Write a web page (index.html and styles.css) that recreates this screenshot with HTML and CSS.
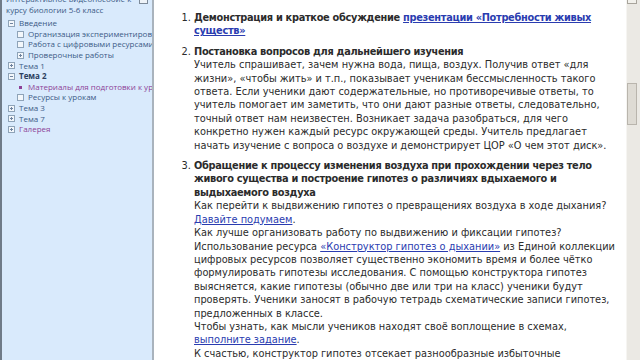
FILE: index.html
```html
<!DOCTYPE html>
<html lang="ru">
<head>
  <meta charset="UTF-8">
  <title>Урок биологии</title>
  <link rel="stylesheet" href="styles.css">
</head>
<body>

<div class="page">

  <div class="sidebar">
    <span class="pin"></span>
    <div class="sb-title">Интерактивное видеопособие к курсу биологии 5-6 класс</div>
    <ul class="tree">
      <li><span class="box minus"></span>Введение</li>
      <li class="sub"><span class="box"></span>Организация экспериментирования</li>
      <li class="sub"><span class="box"></span>Работа с цифровыми ресурсами</li>
      <li class="sub"><span class="box plus"></span>Проверочные работы</li>
      <li><span class="box plus"></span>Тема 1</li>
      <li class="current"><span class="box minus"></span>Тема 2</li>
      <li class="sub visited"><span class="dot"></span>Материалы для подготовки к уроку</li>
      <li class="sub"><span class="box"></span>Ресурсы к урокам</li>
      <li><span class="box plus"></span>Тема 3</li>
      <li><span class="box plus"></span>Тема 7</li>
      <li class="visited"><span class="box plus"></span>Галерея</li>
    </ul>
  </div>

  <div class="content">
    <ol class="steps">
      <li>
        <b>Демонстрация и краткое обсуждение <a href="#">презентации «Потребности живых существ»</a></b>
      </li>
      <li>
        <b>Постановка вопросов для дальнейшего изучения</b><br>
        Учитель спрашивает, зачем нужна вода, пища, воздух. Получив ответ «для жизни», «чтобы жить» и т.п., показывает ученикам бессмысленность такого ответа. Если ученики дают содержательные, но противоречивые ответы, то учитель помогает им заметить, что они дают разные ответы, следовательно, точный ответ нам неизвестен. Возникает задача разобраться, для чего конкретно нужен каждый ресурс окружающей среды. Учитель предлагает начать изучение с вопроса о воздухе и демонстрирует ЦОР «О чем этот диск».
      </li>
      <li>
        <b>Обращение к процессу изменения воздуха при прохождении через тело живого существа и построение гипотез о различиях вдыхаемого и выдыхаемого воздуха</b><br>
        Как перейти к выдвижению гипотез о превращениях воздуха в ходе дыхания?<br>
        <a href="#">Давайте подумаем</a>.<br>
        Как лучше организовать работу по выдвижению и фиксации гипотез?<br>
        Использование ресурса <a href="#">«Конструктор гипотез о дыхании»</a> из Единой коллекции цифровых ресурсов позволяет существенно экономить время и более чётко формулировать гипотезы исследования. С помощью конструктора гипотез выясняется, какие гипотезы (обычно две или три на класс) ученики будут проверять. Ученики заносят в рабочую тетрадь схематические записи гипотез, предложенных в классе.<br>
        Чтобы узнать, как мысли учеников находят своё воплощение в схемах, <a href="#">выполните задание</a>.<br>
        К счастью, конструктор гипотез отсекает разнообразные избыточные варианты.
      </li>
    </ol>
  </div>

  <div class="scrollbar">
    <div class="arrow"></div>
    <div class="thumb"></div>
  </div>

</div>

</body>
</html>
```

FILE: styles.css
```css
body {
  margin: 0px;
  overflow: hidden;
  background: #ffffff;
}

.page {
  display: flex;
  height: 360px;
}

/* левая панель с деревом */
.sidebar {
  position: relative;
  width: 154px;
  flex: none;
  overflow: hidden;
  background: #d9eafc;
  border-left: 2px solid #6f7b88;
  border-right: 2px solid #a9b3bd;
  padding-left: 4px;
  box-sizing: border-box;
  font-family: 'Open Sans', sans-serif;
  font-size: 8px;
  line-height: 10.6px;
  color: #3c5a86;
}

.pin {
  position: absolute;
  top: -3px;
  left: 137px;
  width: 7px;
  height: 5px;
  border: 1px solid #7d8a99;
  background: #eef3f8;
}

.sb-title {
  width: 128px;
  margin-top: -6px;
  padding-bottom: 3px;
}

.tree {
  list-style: none;
  margin: 0px;
  padding: 0px 0px 0px 2px;
}

.tree li {
  white-space: nowrap;
  display: flex;
  align-items: center;
  gap: 4px;
}

.tree li.sub { padding-left: 9px; }
.tree li.current { font-weight: bold; color: #2c3f60; }
.tree li.visited { color: #8d3f97; }

.box {
  position: relative;
  flex: none;
  width: 5px;
  height: 5px;
  border: 1px solid #8ea3b8;
  background: #f3f7fb;
}

.box.plus::before, .box.minus::before {
  content: '';
  position: absolute;
  left: 1px;
  top: 2px;
  width: 3px;
  height: 1px;
  background: #6f84a0;
}

.box.plus::after {
  content: '';
  position: absolute;
  left: 2px;
  top: 1px;
  width: 1px;
  height: 3px;
  background: #6f84a0;
}

.dot {
  flex: none;
  width: 3px;
  height: 3px;
  margin: 0px 2px;
  background: #8d3f97;
}

/* основной текст */
.content {
  flex: 1;
  overflow: hidden;
  font-family: 'DejaVu Sans', Verdana, sans-serif;
  font-size: 9.8px;
  line-height: 13.4px;
  color: #2b2b2b;
  padding: 11px 10px 0px 0px;
}

.steps {
  margin: 0px;
  padding-left: 40px;
}

.steps li { margin-bottom: 7px; }
.steps li::marker { font-weight: normal; }
.steps b { letter-spacing: -0.3px; }

.steps a { color: #2a3cb0; }

/* полоса прокрутки */
.scrollbar {
  width: 14px;
  flex: none;
  background: #ebe9e4;
  border-left: 1px solid #f6f5f2;
  box-sizing: border-box;
}

.arrow {
  width: 10px;
  height: 4px;
  margin-bottom: 79px;
  border: 1px solid #a8a49c;
  border-top: none;
  background: #f2f1ec;
  box-sizing: border-box;
}

.thumb {
  width: 10px;
  height: 42px;
  border: 1px solid #b9b5ad;
  background: #dedbd4;
  box-sizing: border-box;
}
```
